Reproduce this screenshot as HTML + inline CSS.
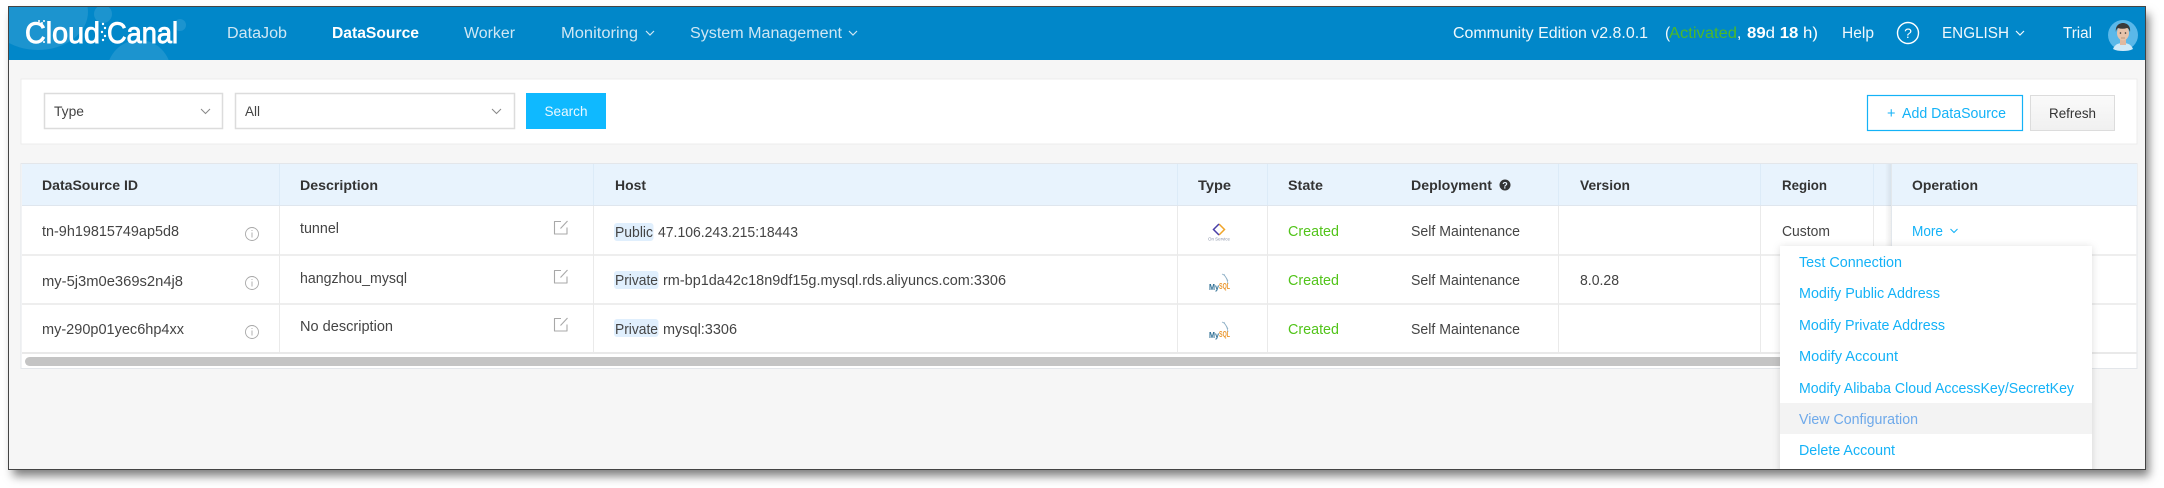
<!DOCTYPE html>
<html><head><meta charset="utf-8"><style>
html,body{margin:0;padding:0;background:#fff;width:2164px;height:488px;overflow:hidden}
#w{position:absolute;left:9px;top:7px;width:2136px;height:462px;background:#f6f6f6;box-shadow:0 0 0 1px #444,4px 7px 9px rgba(0,0,0,.5)}
svg{position:absolute;left:0;top:0}
text{font-family:"Liberation Sans",sans-serif;font-size:14.5px;fill:#444}
.n{font-size:15.5px;fill:#cfe7f4}
.h{font-size:15.5px;fill:#f0f8fc}
.b{font-weight:bold;font-size:14px;fill:#333}
.g{fill:#52c41a}
.l{fill:#14b2f7}
</style></head><body><div id="w"></div>
<svg width="2164" height="488" viewBox="0 0 2164 488" xmlns="http://www.w3.org/2000/svg">
<defs>
<clipPath id="hc"><rect x="9" y="7" width="2136" height="53"/></clipPath>
<clipPath id="wc"><rect x="9" y="7" width="2136" height="462"/></clipPath>
<linearGradient id="sh" x1="0" x2="1"><stop offset="0" stop-color="#000" stop-opacity="0"/><stop offset="1" stop-color="#000" stop-opacity=".07"/></linearGradient>
<linearGradient id="rf" x1="0" x2="0" y1="0" y2="1"><stop offset="0" stop-color="#fafafa"/><stop offset="1" stop-color="#f0f0f0"/></linearGradient>
</defs>
<!-- header -->
<rect x="9" y="7" width="2136" height="53" fill="#0187c9"/>
<g clip-path="url(#hc)" fill="#fff" fill-opacity=".11">
<ellipse cx="38" cy="12" rx="50" ry="38"/><circle cx="103" cy="14" r="9"/><circle cx="139" cy="72" r="32"/><circle cx="180" cy="25" r="6"/>
</g>
<text x="25" y="43" textLength="75" lengthAdjust="spacingAndGlyphs" style="font-size:30px;fill:#fff;stroke:#fff;stroke-width:.9">Cloud</text>
<text x="107" y="43" textLength="71" lengthAdjust="spacingAndGlyphs" style="font-size:30px;fill:#fff;stroke:#fff;stroke-width:.9">Canal</text>
<g fill="#fff"><circle cx="39" cy="21" r="1"/><circle cx="42" cy="23" r="1"/><circle cx="44" cy="21" r="1"/><circle cx="39" cy="42" r="1"/><circle cx="42" cy="40" r="1"/><circle cx="44" cy="42" r="1"/><circle cx="103" cy="24" r="1.2"/><circle cx="105" cy="28" r="1.2"/><circle cx="102" cy="32" r="1.2"/><circle cx="105" cy="36" r="1.2"/><circle cx="103" cy="40" r="1.2"/></g>
<text class="n" x="227" y="38" textLength="60" lengthAdjust="spacingAndGlyphs">DataJob</text>
<text x="332" y="38" textLength="87" lengthAdjust="spacingAndGlyphs" style="font-size:15.5px;font-weight:bold;fill:#fff">DataSource</text>
<text class="n" x="464" y="38" textLength="51" lengthAdjust="spacingAndGlyphs">Worker</text>
<text class="n" x="561" y="38" textLength="77" lengthAdjust="spacingAndGlyphs">Monitoring</text>
<path d="M646 31l4 4 4-4" fill="none" stroke="#cfe7f4" stroke-width="1.2"/>
<text class="n" x="690" y="38" textLength="152" lengthAdjust="spacingAndGlyphs">System Management</text>
<path d="M849 31l4 4 4-4" fill="none" stroke="#cfe7f4" stroke-width="1.2"/>
<text class="h" x="1453" y="38" textLength="195" lengthAdjust="spacingAndGlyphs">Community Edition v2.8.0.1</text>
<text class="h" x="1665" y="38">(</text>
<text class="g" x="1669" y="38" textLength="68" lengthAdjust="spacingAndGlyphs" style="font-size:15.5px;fill:#4cb82a">Activated</text>
<text class="h" x="1737" y="38">,</text>
<text x="1747" y="38" textLength="71" lengthAdjust="spacingAndGlyphs" style="font-size:15.5px;fill:#fff"><tspan font-weight="bold">89</tspan>d <tspan font-weight="bold">18</tspan> h)</text>
<text class="h" x="1842" y="38" textLength="32" lengthAdjust="spacingAndGlyphs">Help</text>
<circle cx="1908" cy="33" r="10.5" fill="none" stroke="#fff" stroke-width="1.4"/>
<text x="1908" y="38" text-anchor="middle" style="font-size:14px;fill:#fff">?</text>
<text class="h" x="1942" y="38" textLength="67" lengthAdjust="spacingAndGlyphs">ENGLISH</text>
<path d="M2016 31l4 4 4-4" fill="none" stroke="#f0f8fc" stroke-width="1.2"/>
<text class="h" x="2063" y="38" textLength="29" lengthAdjust="spacingAndGlyphs">Trial</text>
<!-- avatar -->
<circle cx="2123" cy="35" r="15" fill="#5ab8e9"/>
<path d="M2113 49c2-5 6-6 10-6s8 1 10 6c-3 1.500-6 2-10 2s-7-.5-10-2z" fill="#cfe9f8"/>
<rect x="2120" y="38" width="6" height="7" fill="#e0b9a0"/>
<ellipse cx="2123" cy="33" rx="6" ry="7.500" fill="#e8c3aa"/>
<path d="M2116 32c-1-6 3-9 7-9s8 3 7 9c-1-3-2-4-3-4-3 1-6 1-9 0-1 1-2 2-2 4z" fill="#3a3a3a"/>
<circle cx="2120.500" cy="33" r=".8" fill="#333"/><circle cx="2125.500" cy="33" r=".8" fill="#333"/><path d="M2121 38h4" stroke="#a86" stroke-width=".7"/>
<!-- filter panel -->
<rect x="21" y="79" width="2116" height="65" fill="#fff" stroke="#ececec"/>
<rect x="44.500" y="93.500" width="178" height="35" fill="#fff" stroke="#dcdcdc" stroke-width="1.500"/>
<text x="54" y="116" textLength="30" lengthAdjust="spacingAndGlyphs" style="font-size:14px">Type</text>
<path d="M201 109l4.500 4.500 4.500-4.500" fill="none" stroke="#888" stroke-width="1"/>
<rect x="235.500" y="93.500" width="279" height="35" fill="#fff" stroke="#dcdcdc" stroke-width="1.500"/>
<text x="245" y="116" textLength="15" lengthAdjust="spacingAndGlyphs" style="font-size:14px">All</text>
<path d="M492 109l4.500 4.500 4.500-4.500" fill="none" stroke="#888" stroke-width="1"/>
<rect x="526" y="93" width="80" height="36" fill="#0fb9ff"/>
<text x="544.500" y="116" textLength="43" lengthAdjust="spacingAndGlyphs" style="font-size:14px;fill:#eaf8ff">Search</text>
<rect x="1867.500" y="95.500" width="155" height="35" fill="#fff" stroke="#14b2f7" stroke-width="1.200"/>
<text class="l" x="1887" y="118" style="font-size:14.5px">+</text>
<text class="l" x="1902" y="118" textLength="104" lengthAdjust="spacingAndGlyphs" style="font-size:14.5px">Add DataSource</text>
<rect x="2030.500" y="95.500" width="84" height="35" fill="url(#rf)" stroke="#dcdcdc"/>
<text x="2049" y="118" textLength="47" lengthAdjust="spacingAndGlyphs" style="font-size:14px;fill:#333">Refresh</text>
<!-- table -->
<rect x="21" y="163.500" width="2116" height="205" fill="#fff" stroke="#e3e6ea"/>
<rect x="22" y="164" width="2115" height="41" fill="#e8f3fd"/>
<rect x="22" y="205" width="2115" height="1" fill="#dfe6ee"/>
<rect x="22" y="254" width="2115" height="2" fill="#eee"/>
<rect x="22" y="303" width="2115" height="2" fill="#eee"/>
<rect x="22" y="352" width="2115" height="2" fill="#e9e9e9"/>
<g fill="#eaeaea">
<rect x="279" y="206" width="1" height="146"/><rect x="593" y="206" width="1" height="146"/><rect x="1177" y="206" width="1" height="146"/><rect x="1267" y="206" width="1" height="146"/><rect x="1558" y="206" width="1" height="146"/><rect x="1760" y="206" width="1" height="146"/><rect x="1873" y="206" width="1" height="146"/><rect x="1891" y="206" width="1" height="146"/>
</g>
<g fill="#dcebf8">
<rect x="279" y="164" width="1" height="41"/><rect x="593" y="164" width="1" height="41"/><rect x="1177" y="164" width="1" height="41"/><rect x="1267" y="164" width="1" height="41"/><rect x="1558" y="164" width="1" height="41"/><rect x="1760" y="164" width="1" height="41"/><rect x="1873" y="164" width="1" height="41"/>
</g>
<rect x="1885" y="164" width="6" height="190" fill="url(#sh)"/>
<rect x="1891" y="164" width="1" height="190" fill="#e2e7ec"/>
<rect x="25" y="357" width="1760" height="9" rx="4.500" fill="#c4c4c4"/>
<!-- head text -->
<g class="hd">
<text class="b" x="42" y="190" textLength="96" lengthAdjust="spacingAndGlyphs">DataSource ID</text>
<text class="b" x="300" y="190" textLength="78" lengthAdjust="spacingAndGlyphs">Description</text>
<text class="b" x="615" y="190" textLength="31" lengthAdjust="spacingAndGlyphs">Host</text>
<text class="b" x="1198" y="190" textLength="33" lengthAdjust="spacingAndGlyphs">Type</text>
<text class="b" x="1288" y="190" textLength="35" lengthAdjust="spacingAndGlyphs">State</text>
<text class="b" x="1411" y="190" textLength="81" lengthAdjust="spacingAndGlyphs">Deployment</text>
<circle cx="1505" cy="185" r="5.500" fill="#333"/>
<text x="1505" y="188.500" text-anchor="middle" style="font-size:9px;font-weight:bold;fill:#e8f3fd">?</text>
<text class="b" x="1580" y="190" textLength="50" lengthAdjust="spacingAndGlyphs">Version</text>
<text class="b" x="1782" y="190" textLength="45" lengthAdjust="spacingAndGlyphs">Region</text>
<text class="b" x="1912" y="190" textLength="66" lengthAdjust="spacingAndGlyphs">Operation</text>
</g>
<!-- rows -->
<text x="42" y="236" textLength="137" lengthAdjust="spacingAndGlyphs">tn-9h19815749ap5d8</text>
<text x="42" y="286" textLength="141" lengthAdjust="spacingAndGlyphs">my-5j3m0e369s2n4j8</text>
<text x="42" y="334" textLength="142" lengthAdjust="spacingAndGlyphs">my-290p01yec6hp4xx</text>
<g fill="none" stroke="#a8a8a8" stroke-width=".9">
<circle cx="252" cy="234" r="6.500"/><path d="M252 232.500v5M252 230v1"/>
<circle cx="252" cy="283" r="6.500"/><path d="M252 281.500v5M252 279v1"/>
<circle cx="252" cy="332" r="6.500"/><path d="M252 330.500v5M252 328v1"/>
</g>
<text x="300" y="233" textLength="39" lengthAdjust="spacingAndGlyphs">tunnel</text>
<text x="300" y="283" textLength="107" lengthAdjust="spacingAndGlyphs">hangzhou_mysql</text>
<text x="300" y="331" textLength="93" lengthAdjust="spacingAndGlyphs">No description</text>
<g fill="none" stroke="#a8a8a8" stroke-width="1.100" stroke-linejoin="round">
<path d="M561 221.500h-6.500v12.500h12.500v-6.500M560.500 228.500l7-7.500"/>
<path d="M561 270.500h-6.500v12.500h12.500v-6.500M560.500 277.500l7-7.500"/>
<path d="M561 318.500h-6.500v12.500h12.500v-6.500M560.500 325.500l7-7.500"/>
</g>
<rect x="614" y="223" width="39.500" height="18" rx="3" fill="#e0effd"/>
<rect x="614" y="271" width="44.500" height="18" rx="3" fill="#e0effd"/>
<rect x="614" y="319" width="44.500" height="18" rx="3" fill="#e0effd"/>
<text x="615" y="237" textLength="38" lengthAdjust="spacingAndGlyphs">Public</text>
<text x="658" y="237" textLength="140" lengthAdjust="spacingAndGlyphs">47.106.243.215:18443</text>
<text x="615" y="285" textLength="43" lengthAdjust="spacingAndGlyphs">Private</text>
<text x="663" y="285" textLength="343" lengthAdjust="spacingAndGlyphs">rm-bp1da42c18n9df15g.mysql.rds.aliyuncs.com:3306</text>
<text x="615" y="334" textLength="43" lengthAdjust="spacingAndGlyphs">Private</text>
<text x="663" y="334" textLength="74" lengthAdjust="spacingAndGlyphs">mysql:3306</text>
<!-- type icons -->
<path d="M1219 224l5.500 5.500-5.500 5.500" fill="none" stroke="#f0a52a" stroke-width="1.500"/>
<path d="M1219 235l-5.500-5.500 5.500-5.500" fill="none" stroke="#4a3fa8" stroke-width="1.500"/>
<text x="1219" y="240.500" text-anchor="middle" textLength="22" lengthAdjust="spacingAndGlyphs" style="font-size:4.500px;fill:#8a93a8">On Service</text>
<g>
<path d="M1222 274c3 1 5 4 6 10" fill="none" stroke="#8fb0c6" stroke-width=".8"/><path d="M1224 274c1 3 3 4 4 7" fill="none" stroke="#8fb0c6" stroke-width=".7"/>
<text x="1209" y="290" textLength="10" lengthAdjust="spacingAndGlyphs" style="font-size:8.500px;font-weight:bold;fill:#2b6c92">My</text>
<text x="1219" y="289" textLength="11" lengthAdjust="spacingAndGlyphs" style="font-size:8.500px;font-weight:bold;fill:#e9962d">SQL</text>
</g>
<g>
<path d="M1222 322c3 1 5 4 6 10" fill="none" stroke="#8fb0c6" stroke-width=".8"/><path d="M1224 322c1 3 3 4 4 7" fill="none" stroke="#8fb0c6" stroke-width=".7"/>
<text x="1209" y="338" textLength="10" lengthAdjust="spacingAndGlyphs" style="font-size:8.500px;font-weight:bold;fill:#2b6c92">My</text>
<text x="1219" y="337" textLength="11" lengthAdjust="spacingAndGlyphs" style="font-size:8.500px;font-weight:bold;fill:#e9962d">SQL</text>
</g>
<text class="g" x="1288" y="236" textLength="51" lengthAdjust="spacingAndGlyphs">Created</text>
<text class="g" x="1288" y="285" textLength="51" lengthAdjust="spacingAndGlyphs">Created</text>
<text class="g" x="1288" y="334" textLength="51" lengthAdjust="spacingAndGlyphs">Created</text>
<text x="1411" y="236" textLength="109" lengthAdjust="spacingAndGlyphs">Self Maintenance</text>
<text x="1411" y="285" textLength="109" lengthAdjust="spacingAndGlyphs">Self Maintenance</text>
<text x="1411" y="334" textLength="109" lengthAdjust="spacingAndGlyphs">Self Maintenance</text>
<text x="1580" y="285" textLength="39" lengthAdjust="spacingAndGlyphs">8.0.28</text>
<text x="1782" y="236" textLength="48" lengthAdjust="spacingAndGlyphs">Custom</text>
<text class="l" x="1912" y="236" textLength="31" lengthAdjust="spacingAndGlyphs">More</text>
<path d="M1950.500 229l3.500 3.500 3.500-3.500" fill="none" stroke="#14b2f7" stroke-width="1.100"/>
<!-- dropdown -->
<g clip-path="url(#wc)">
<rect x="1780" y="246" width="312" height="240" fill="#fff" style="filter:drop-shadow(0 1px 4px rgba(0,0,0,.14))"/>
<rect x="1780" y="403" width="312" height="31" fill="#f3f3f3"/>
<text class="l" x="1799" y="267" textLength="103" lengthAdjust="spacingAndGlyphs">Test Connection</text>
<text class="l" x="1799" y="298" textLength="141" lengthAdjust="spacingAndGlyphs">Modify Public Address</text>
<text class="l" x="1799" y="330" textLength="146" lengthAdjust="spacingAndGlyphs">Modify Private Address</text>
<text class="l" x="1799" y="361" textLength="99" lengthAdjust="spacingAndGlyphs">Modify Account</text>
<text class="l" x="1799" y="393" textLength="275" lengthAdjust="spacingAndGlyphs">Modify Alibaba Cloud AccessKey/SecretKey</text>
<text x="1799" y="424" textLength="119" lengthAdjust="spacingAndGlyphs" style="fill:#6ea9ea">View Configuration</text>
<text class="l" x="1799" y="455" textLength="96" lengthAdjust="spacingAndGlyphs">Delete Account</text>
</g>
<!-- window edge over content -->
<rect x="8.500" y="6.500" width="2137" height="463" fill="none" stroke="#444" stroke-width="1"/>
</svg>
</body></html>
